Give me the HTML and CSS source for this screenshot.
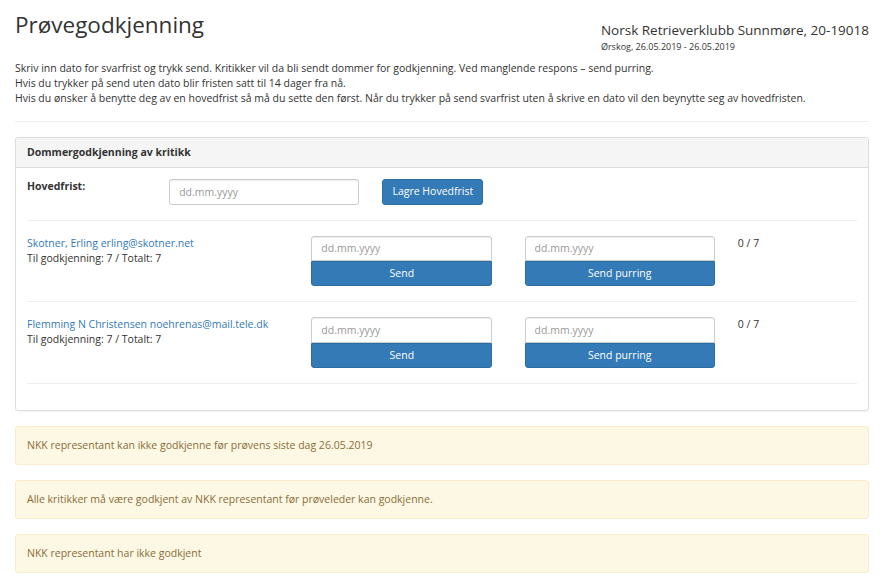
FILE: index.html
```html
<!DOCTYPE html>
<html lang="no">
<head>
<meta charset="utf-8">
<title>Prøvegodkjenning</title>
<link rel="stylesheet" href="styles.css">
</head>
<body>
<div class="page">
  <header class="top">
    <h1 class="title">Prøvegodkjenning</h1>
    <div class="event">
      <h2 class="event-name">Norsk Retrieverklubb Sunnmøre, 20-19018</h2>
      <div class="event-meta">Ørskog, 26.05.2019 - 26.05.2019</div>
    </div>
  </header>

  <p class="intro">Skriv inn dato for svarfrist og trykk send. Kritikker vil da bli sendt dommer for godkjenning. Ved manglende respons – send purring.<br>Hvis du trykker på send uten dato blir fristen satt til 14 dager fra nå.<br>Hvis du ønsker å benytte deg av en hovedfrist så må du sette den først. Når du trykker på send svarfrist uten å skrive en dato vil den beynytte seg av hovedfristen.</p>

  <hr class="divider">

  <section class="panel">
    <div class="panel-heading">Dommergodkjenning av kritikk</div>
    <div class="panel-body">
      <div class="grid-row">
        <label class="label span-2">Hovedfrist:</label>
        <div class="span-3"><input class="form-control" type="text" placeholder="dd.mm.yyyy"></div>
        <div class="span-2"><button class="btn" type="button">Lagre Hovedfrist</button></div>
      </div>
      <hr class="row-sep">

      <div class="grid-row">
        <div class="span-4">
          <a class="judge" href="#">Skotner, Erling erling@skotner.net</a><br>
          Til godkjenning: 7 / Totalt: 7
        </div>
        <div class="span-3 stack narrow">
          <input class="form-control joined" type="text" placeholder="dd.mm.yyyy">
          <button class="btn joined" type="button">Send</button>
        </div>
        <div class="span-3 stack">
          <input class="form-control joined" type="text" placeholder="dd.mm.yyyy">
          <button class="btn joined" type="button">Send purring</button>
        </div>
        <div class="span-2 count">0 / 7</div>
      </div>
      <hr class="row-sep">

      <div class="grid-row">
        <div class="span-4">
          <a class="judge" href="#">Flemming N Christensen noehrenas@mail.tele.dk</a><br>
          Til godkjenning: 7 / Totalt: 7
        </div>
        <div class="span-3 stack narrow">
          <input class="form-control joined" type="text" placeholder="dd.mm.yyyy">
          <button class="btn joined" type="button">Send</button>
        </div>
        <div class="span-3 stack">
          <input class="form-control joined" type="text" placeholder="dd.mm.yyyy">
          <button class="btn joined" type="button">Send purring</button>
        </div>
        <div class="span-2 count">0 / 7</div>
      </div>
      <hr class="row-sep last">
    </div>
  </section>

  <div class="alert">NKK representant kan ikke godkjenne før prøvens siste dag 26.05.2019</div>
  <div class="alert">Alle kritikker må være godkjent av NKK representant før prøveleder kan godkjenne.</div>
  <div class="alert">NKK representant har ikke godkjent</div>
</div>
</body>
</html>
```

FILE: styles.css
```css
* { box-sizing: border-box; }

html, body {
  margin: 0;
  background: #fff;
}

body {
  font-family: "Open Sans", "Liberation Sans", sans-serif;
  font-size: 10.5px;
  line-height: 15px;
  color: #333;
}

.page {
  padding: 0 22px 0 15px;
}

.top {
  display: flex;
  justify-content: space-between;
  align-items: flex-start;
}

.title {
  margin: 12px 0 0;
  font-size: 22.5px;
  line-height: 25px;
  font-weight: 400;
  color: #333;
}

.event {
  margin-top: 21px;
}

.event-name {
  margin: 0;
  font-size: 13.5px;
  line-height: 18px;
  font-weight: 400;
  color: #333;
}

.event-meta {
  margin-top: 2px;
  font-size: 9px;
  line-height: 12px;
}

.intro {
  margin: 8px 0 0;
}

.divider {
  margin: 15px 0;
  border: 0;
  border-top: 1px solid #eee;
}

.panel {
  border: 1px solid #ddd;
  border-radius: 3px;
  box-shadow: 0 1px 1px rgba(0,0,0,0.05);
  margin-bottom: 15px;
}

.panel-heading {
  background: #f5f5f5;
  border-bottom: 1px solid #ddd;
  border-radius: 2px 2px 0 0;
  padding: 7px 11px 7px;
  font-weight: 700;
}

.panel-body {
  padding: 11px 11px;
}

.grid-row {
  display: grid;
  grid-template-columns: repeat(12, 1fr);
  column-gap: 23px;
  align-items: start;
}

.span-2 { grid-column: span 2; }
.span-3 { grid-column: span 3; }
.span-4 { grid-column: span 4; }

.label {
  font-weight: 700;
}

.form-control {
  display: block;
  width: 100%;
  height: 25.5px;
  margin: 0;
  padding: 0 9px;
  font-family: inherit;
  font-size: 10.5px;
  color: #555;
  background: #fff;
  border: 1px solid #ccc;
  border-radius: 3px;
  box-shadow: inset 0 1px 1px rgba(0,0,0,0.075);
}

.form-control::placeholder {
  color: #999;
}

.btn {
  display: inline-block;
  height: 25.5px;
  margin: 0;
  padding: 0 9px;
  font-family: inherit;
  font-size: 10.5px;
  line-height: 23px;
  color: #fff;
  background: #337ab7;
  border: 1px solid #2e6da4;
  border-radius: 3px;
  cursor: pointer;
}

.stack .btn {
  display: block;
  width: 100%;
  height: 25px;
  line-height: 23px;
}

.stack .form-control.joined {
  border-radius: 3px 3px 0 0;
}

.stack .btn.joined {
  border-radius: 0 0 3px 3px;
}

.narrow {
  width: 181px;
}

.judge {
  color: #337ab7;
  text-decoration: none;
}

.row-sep {
  margin: 15px 0;
  border: 0;
  border-top: 1px solid #eee;
}

.row-sep.last {
  margin-bottom: 15px;
}

.alert {
  padding: 11px;
  margin-bottom: 15px;
  color: #8a6d3b;
  background: #fcf8e3;
  border: 1px solid #faebcc;
  border-radius: 3px;
}
```
